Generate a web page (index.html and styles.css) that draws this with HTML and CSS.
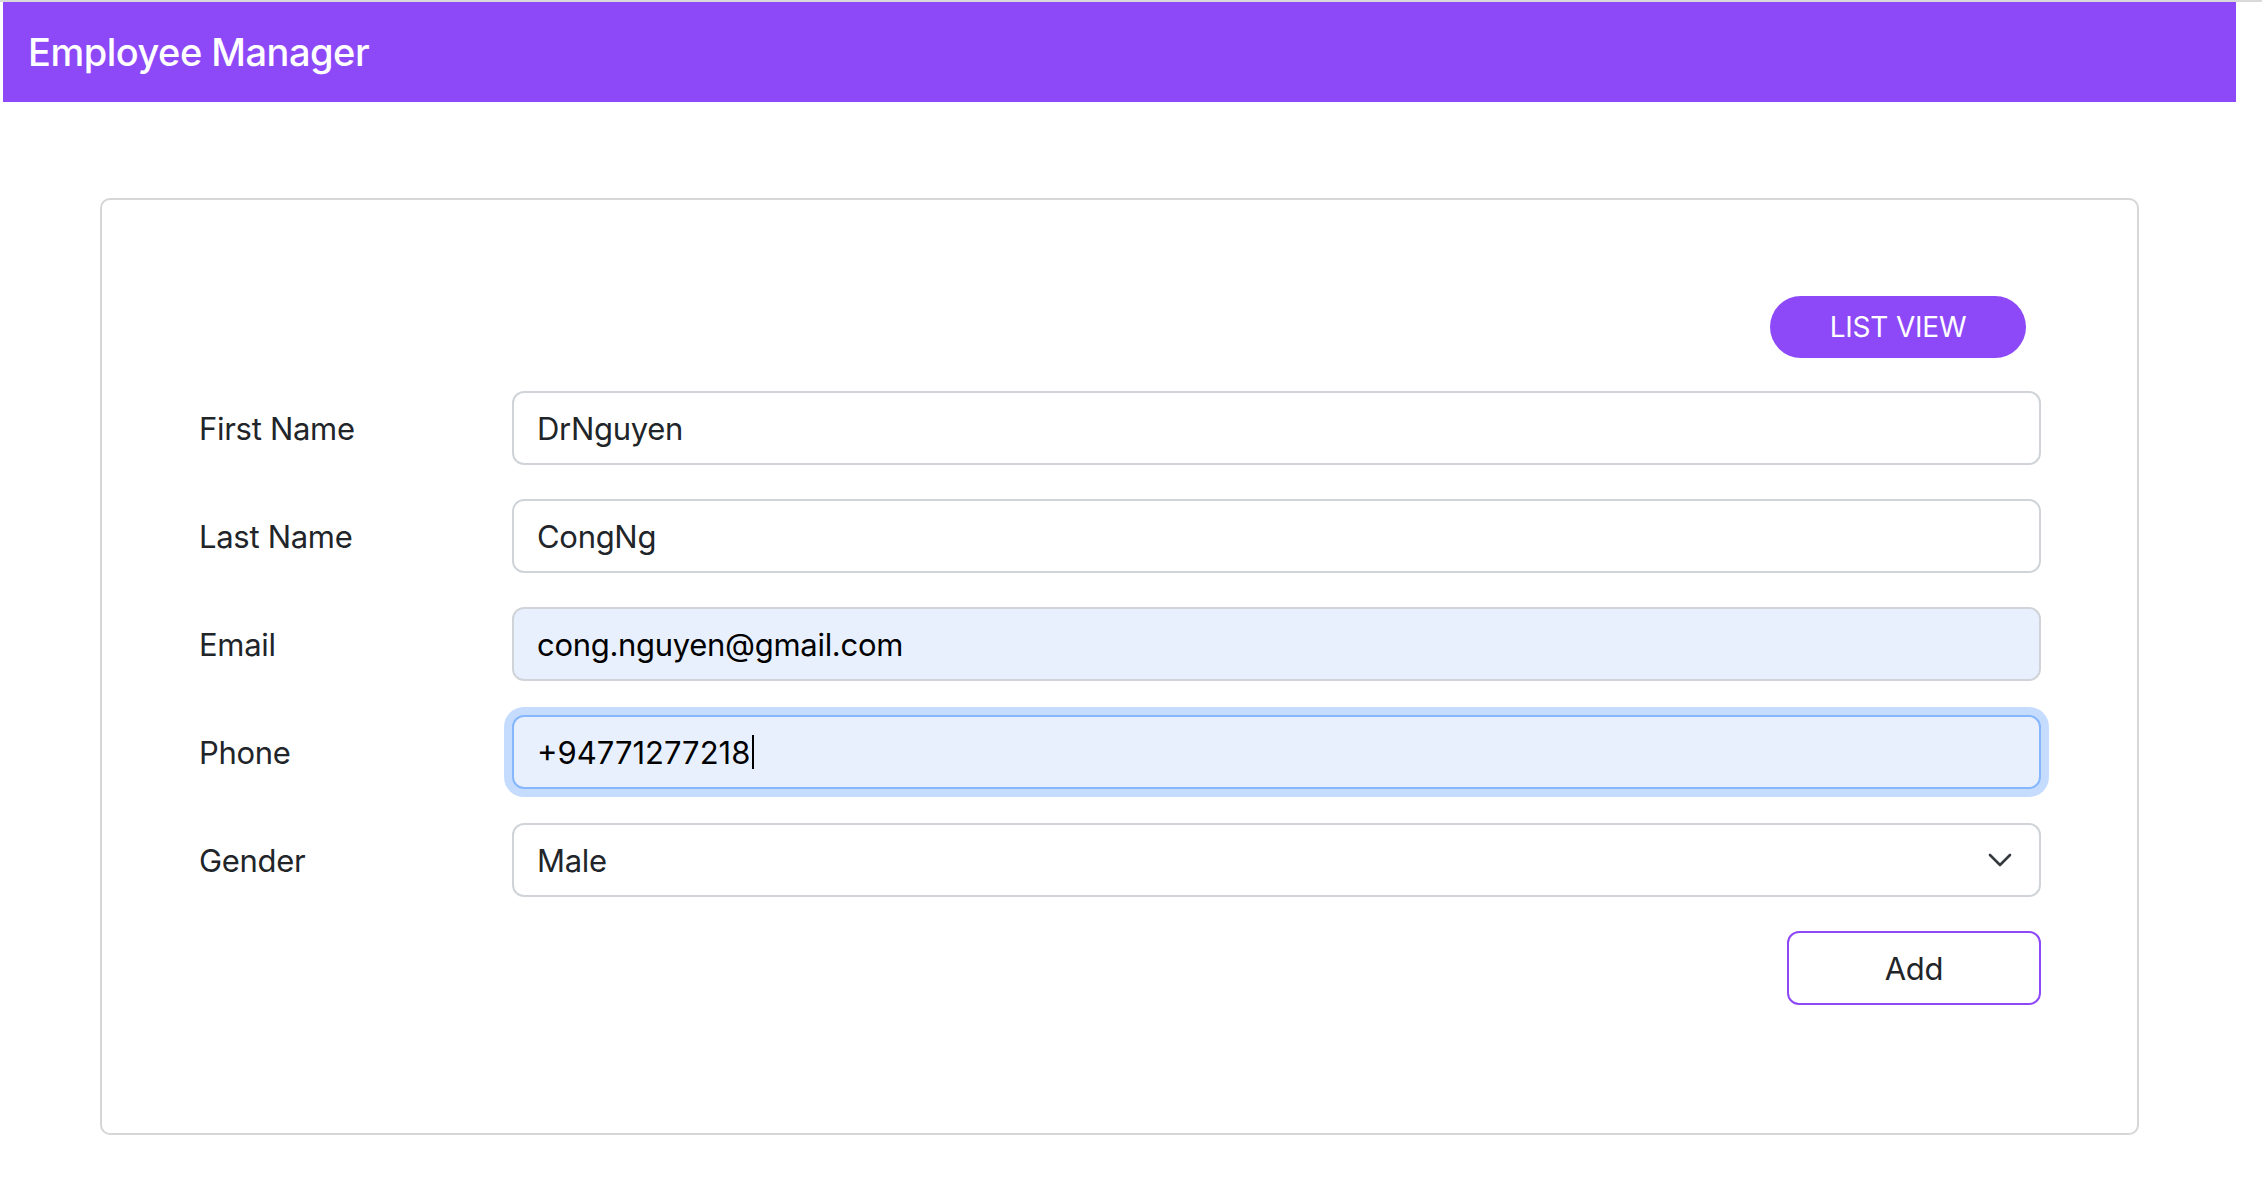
FILE: index.html
```html
<!DOCTYPE html>
<html lang="en">
<head>
<meta charset="utf-8">
<title>Employee Manager</title>
<link rel="stylesheet" href="styles.css">
</head>
<body>
<div class="app">
  <header class="topbar">
    <span class="brand">Employee Manager</span>
  </header>
  <main class="main">
    <section class="card">
      <div class="toolbar">
        <button class="btn-list" type="button">LIST VIEW</button>
      </div>
      <form class="form">
        <label class="label" for="fn">First Name</label>
        <input class="field" id="fn" type="text" value="DrNguyen">

        <label class="label" for="ln">Last Name</label>
        <input class="field" id="ln" type="text" value="CongNg">

        <label class="label" for="em">Email</label>
        <input class="field autofill" id="em" type="text" value="cong.nguyen@gmail.com">

        <label class="label">Phone</label>
        <div class="field autofill focused"><span class="digits">+94771277218</span><span class="caret"></span></div>

        <label class="label" for="gd">Gender</label>
        <div class="select-wrap">
          <select class="field select" id="gd">
            <option>Male</option>
            <option>Female</option>
          </select>
          <svg class="chevron" width="24" height="14" viewBox="0 0 24 14"><path d="M2 2 L12 12 L22 2" fill="none" stroke="#343a40" stroke-width="2.6" stroke-linecap="round" stroke-linejoin="round"/></svg>
        </div>

        <span></span>
        <div class="actions">
          <button class="btn-add" type="button">Add</button>
        </div>
      </form>
    </section>
  </main>
</div>
</body>
</html>
```

FILE: styles.css
```css
* { box-sizing: border-box; }

html, body { background: #ffffff; }

body {
  margin: 0;
  border-top: 2px solid #d9d9d9;
  font-family: Inter, "Noto Sans", "Liberation Sans", sans-serif;
  color: #212529;
}

.app {
  margin-left: 3px;
  width: 2233px;
}

.topbar {
  height: 100px;
  background: #8d49f8;
  display: flex;
  align-items: center;
  padding-left: 25px;
}

.brand {
  color: #ffffff;
  font-size: 38px;
  font-weight: 500;
  letter-spacing: -0.5px;
}

.main {
  padding: 96px 97px;
}

.card {
  border: 2px solid #d6d6d6;
  border-radius: 10px;
  padding: 96px 96px 128px 97px;
}

.toolbar {
  display: flex;
  justify-content: flex-end;
  padding-right: 15px;
  margin-bottom: 33px;
}

.btn-list {
  width: 256px;
  height: 62px;
  border: none;
  border-radius: 31px;
  background: #8d49f8;
  color: #ffffff;
  font-family: inherit;
  font-size: 28px;
  font-weight: 400;
  letter-spacing: -0.2px;
  padding: 0;
}

.form {
  display: grid;
  grid-template-columns: 313px 1fr;
  row-gap: 34px;
  align-items: center;
}

.label {
  font-size: 31px;
  letter-spacing: -0.3px;
  color: #212529;
}

.field {
  width: 100%;
  height: 74px;
  border: 2px solid #d0d4d9;
  border-radius: 12px;
  background: #ffffff;
  padding: 0 23px;
  font-family: inherit;
  font-size: 31px;
  letter-spacing: -0.3px;
  color: #212529;
  display: flex;
  align-items: center;
  outline: none;
}

.autofill {
  background: #e8f0fe;
  color: #000000;
}

.focused {
  border-color: #86b7fe;
  box-shadow: 0 0 0 8px rgba(13, 110, 253, 0.24);
}

.digits {
  letter-spacing: 0;
}

.caret {
  display: inline-block;
  width: 2px;
  height: 34px;
  background: #000000;
  margin-left: 2px;
}

.select-wrap {
  position: relative;
}

.select {
  appearance: none;
  -webkit-appearance: none;
  display: block;
}

.chevron {
  position: absolute;
  right: 29px;
  top: 30px;
  pointer-events: none;
}

.actions {
  display: flex;
  justify-content: flex-end;
}

.btn-add {
  width: 254px;
  height: 74px;
  border: 2px solid #8d49f8;
  border-radius: 12px;
  background: #ffffff;
  color: #212529;
  font-family: inherit;
  font-size: 31px;
  letter-spacing: -0.3px;
  padding: 0;
}
```
